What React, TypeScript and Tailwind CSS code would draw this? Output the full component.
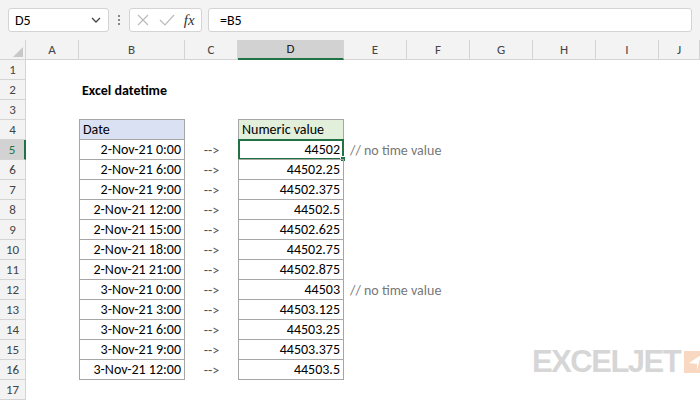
import React from "react";

const cols = ["A","B","C","D","E","F","G","H","I","J"];
const dates = ["2-Nov-21 0:00","2-Nov-21 6:00","2-Nov-21 9:00","2-Nov-21 12:00","2-Nov-21 15:00","2-Nov-21 18:00","2-Nov-21 21:00","3-Nov-21 0:00","3-Nov-21 3:00","3-Nov-21 6:00","3-Nov-21 9:00","3-Nov-21 12:00"];
const vals = ["44502","44502.25","44502.375","44502.5","44502.625","44502.75","44502.875","44503","44503.125","44503.25","44503.375","44503.5"];

export default function App() {
  const rows = Array.from({ length: 17 }, (_, i) => i + 1);
  return (
    <div className="relative w-[700px] h-[400px] overflow-hidden bg-white text-[14px] text-black" style={{ fontFamily: "Calibri, Carlito, 'Open Sans', sans-serif" }}>
      <div className="h-[40px] bg-[#f3f3f3] flex items-center px-[8px] gap-[6px]">
        <div className="w-[101px] h-[24px] bg-white border border-[#d4d4d4] rounded-[3px] flex items-center justify-between px-[6px]">
          <span className="text-[14px]">D5</span>
          <svg width="12" height="12" viewBox="0 0 12 12"><path d="M2 4l4 4 4-4" stroke="#444" strokeWidth="1.3" fill="none"/></svg>
        </div>
        <div className="flex flex-col gap-[2px] mx-[3px]">
          {[0,1,2].map(i=><div key={i} className="w-[2px] h-[2px] bg-[#888]"/>)}
        </div>
        <div className="w-[73px] h-[24px] bg-white border border-[#d4d4d4] rounded-[3px] flex items-center justify-around px-[2px]">
          <svg width="14" height="14" viewBox="0 0 14 14"><path d="M2 2l10 10M12 2L2 12" stroke="#bbb" strokeWidth="1.2"/></svg>
          <svg width="16" height="14" viewBox="0 0 16 14"><path d="M1 7l5 5 9-10" stroke="#bbb" strokeWidth="1.2" fill="none"/></svg>
          <span className="italic text-[15px] text-[#333]" style={{ fontFamily: "'Liberation Serif', serif" }}>fx</span>
        </div>
        <div className="flex-1 h-[24px] bg-white border border-[#d4d4d4] rounded-[3px] flex items-center px-[11px] text-[14px]">=B5</div>
      </div>
      <div className="grid" style={{ gridTemplateColumns: "26px 53px 106px 53px 106px 63px 63px 63px 63px 63px 41px", gridAutoRows: "20px" }}>
        <div className="bg-[#f3f3f3] border-b border-[#d4d4d4] border-r relative">
          <svg className="absolute right-[2px] bottom-[2px]" width="10" height="10"><path d="M10 0L10 10L0 10Z" fill="#c8c8c8"/></svg>
        </div>
        {cols.map(c => (
          <div key={c} className={`flex items-center justify-center text-[13px] border-r border-[#d4d4d4] ${c === "D" ? "bg-[#d2d2d2] border-b-2 border-b-[#217346] text-[#222]" : "bg-[#f3f3f3] border-b text-[#444]"}`}>{c}</div>
        ))}
        {rows.map(r => {
          const i = r - 5;
          const inTable = r >= 4 && r <= 16;
          return (
            <React.Fragment key={r}>
              <div className={`flex items-center justify-center text-[13px] border-b border-r border-[#d4d4d4] ${r === 5 ? "bg-[#d2d2d2] text-[#217346] border-r-2 border-r-[#217346]" : "bg-[#f3f3f3] text-[#444]"}`}>{r}</div>
              <div />
              <div className={`flex items-center px-[3px] ${inTable ? "border border-[#a6a6a6] -mt-px" : ""} ${r === 4 ? "bg-[#d9e1f2]" : "justify-end"} ${r === 2 ? "font-bold !justify-start overflow-visible whitespace-nowrap" : ""}`}>
                {r === 2 ? "Excel datetime" : r === 4 ? "Date" : r >= 5 && r <= 16 ? dates[i] : ""}
              </div>
              <div className="flex items-center justify-center text-[#555]">{r >= 5 && r <= 16 ? "-->" : ""}</div>
              <div className={`relative flex items-center px-[3px] ${inTable ? "border border-[#a6a6a6] -mt-px" : ""} ${r === 4 ? "bg-[#e2efda]" : "justify-end"}`}>
                {r === 4 ? "Numeric value" : r >= 5 && r <= 16 ? vals[i] : ""}
                {r === 5 && (
                  <div className="absolute -left-px -top-px -right-px -bottom-px border-2 border-[#217346]">
                    <div className="absolute -right-[4px] -bottom-[4px] w-[6px] h-[6px] bg-[#217346] border border-white" />
                  </div>
                )}
              </div>
              <div className="flex items-center px-[6px] whitespace-nowrap text-[#777] overflow-visible">{r === 5 || r === 12 ? "// no time value" : ""}</div>
              <div /><div /><div /><div /><div />
            </React.Fragment>
          );
        })}
      </div>
      <div className="absolute left-[532px] top-[346px] flex items-center gap-[4px]">
        <span className="text-[31px] font-black tracking-[-1.5px] text-[#d6d6d6] leading-none" style={{ fontFamily: "'Liberation Sans', Arial, sans-serif" }}>EXCELJET</span>
        <svg width="22" height="22" viewBox="0 0 22 22"><rect width="22" height="22" fill="#f8d8c0"/><path d="M17 4L5 12l8 1z" fill="#fff"/><path d="M17 4L13 19l0-6z" fill="#fff"/></svg>
      </div>
    </div>
  );
}
